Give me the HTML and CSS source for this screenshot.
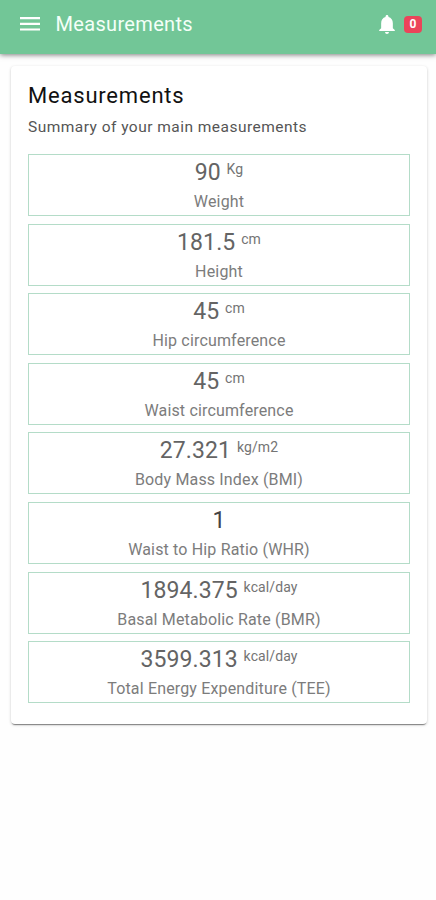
FILE: index.html
```html
<!DOCTYPE html>
<html lang="en">
  <head>
    <meta charset="UTF-8" />
    <meta name="viewport" content="width=device-width, initial-scale=1.0" />
    <title>Measurements</title>
    <link rel="stylesheet" href="styles.css">
  </head>
  <body>
    <header class="toolbar">
      <svg class="menu-icon" viewBox="0 0 20 14">
        <path d="M0 0h20v2.2H0zM0 5.7h20v2.2H0zM0 11.4h20v2.2H0z" />
      </svg>
      <h1>Measurements</h1>
      <svg class="bell-icon" viewBox="4 2.5 16 19.5">
        <path d="M12 22c1.1 0 2-.9 2-2h-4c0 1.1.89 2 2 2zm6-6v-5c0-3.07-1.64-5.64-4.5-6.32V4c0-.83-.67-1.5-1.5-1.5s-1.5.67-1.5 1.5v.68C7.63 5.36 6 7.92 6 11v5l-2 2v1h16v-1l-2-2z" />
      </svg>
      <span class="badge">0</span>
    </header>

    <main class="card">
      <h2>Measurements</h2>
      <p class="subtitle">Summary of your main measurements</p>

      <div class="list">
        <div class="item">
          <div class="value">90 <sup>Kg</sup></div>
          <div class="label">Weight</div>
        </div>
        <div class="item">
          <div class="value">181.5 <sup>cm</sup></div>
          <div class="label">Height</div>
        </div>
        <div class="item">
          <div class="value">45 <sup>cm</sup></div>
          <div class="label">Hip circumference</div>
        </div>
        <div class="item">
          <div class="value">45 <sup>cm</sup></div>
          <div class="label">Waist circumference</div>
        </div>
        <div class="item">
          <div class="value">27.321 <sup>kg/m2</sup></div>
          <div class="label">Body Mass Index (BMI)</div>
        </div>
        <div class="item">
          <div class="value dark">1</div>
          <div class="label">Waist to Hip Ratio (WHR)</div>
        </div>
        <div class="item">
          <div class="value">1894.375 <sup>kcal/day</sup></div>
          <div class="label">Basal Metabolic Rate (BMR)</div>
        </div>
        <div class="item">
          <div class="value">3599.313 <sup>kcal/day</sup></div>
          <div class="label">Total Energy Expenditure (TEE)</div>
        </div>
      </div>
    </main>
  </body>
</html>
```
FILE: styles.css
```css
* {
  margin: 0;
  padding: 0;
  box-sizing: border-box;
}

body {
  min-height: 100vh;
  font-family: Roboto, sans-serif;
  background: #fefefe;
  color: #666;
}

.toolbar {
  display: flex;
  align-items: center;
  height: 54px;
  padding: 0 14px 6px 20px;
  background: #72c697;
  color: #fff;
  box-shadow: 0 1px 5px rgba(0, 0, 0, 0.5);
}

.toolbar svg {
  fill: #fff;
}

.menu-icon {
  width: 20px;
  height: 14px;
}

.toolbar h1 {
  flex: 1;
  margin-left: 15.5px;
  font-size: 20px;
  font-weight: 400;
  letter-spacing: 0.33px;
  color: #f4fff8;
}

.bell-icon {
  width: 16px;
  height: 19px;
}

.badge {
  width: 18px;
  height: 17px;
  margin-left: 9px;
  border-radius: 4px;
  background: #eb445a;
  font-size: 12px;
  font-weight: 700;
  line-height: 17px;
  text-align: center;
}

.card {
  margin: 12px 9px 0 11px;
  padding: 16px 17px 21px 17px;
  border-radius: 4px;
  background: #fff;
  box-shadow: 0 2px 1px -1px rgba(0, 0, 0, 0.4), 0 1px 3px rgba(0, 0, 0, 0.22);
}

.card h2 {
  font-size: 22px;
  font-weight: 400;
  line-height: 28px;
  letter-spacing: 0.8px;
  color: #111;
}

.subtitle {
  margin-top: 7px;
  font-size: 15.5px;
  font-weight: 400;
  line-height: 20px;
  letter-spacing: 0.47px;
  color: #555;
}

.list {
  display: grid;
  gap: 7.6px;
  margin-top: 17px;
}

.item {
  height: 62px;
  border: 1px solid #b4dcc8;
  text-align: center;
}

.value {
  height: 34px;
  font-size: 23px;
  font-weight: 400;
  line-height: 35px;
  letter-spacing: 0.1px;
  color: #646464;
}

.value.dark {
  color: #444;
}

.value sup {
  font-size: 14px;
  line-height: 0;
  vertical-align: 6px;
  color: #747474;
}

.label {
  font-size: 16px;
  line-height: 26px;
  letter-spacing: 0.16px;
  color: #7c7c7c;
}
```
